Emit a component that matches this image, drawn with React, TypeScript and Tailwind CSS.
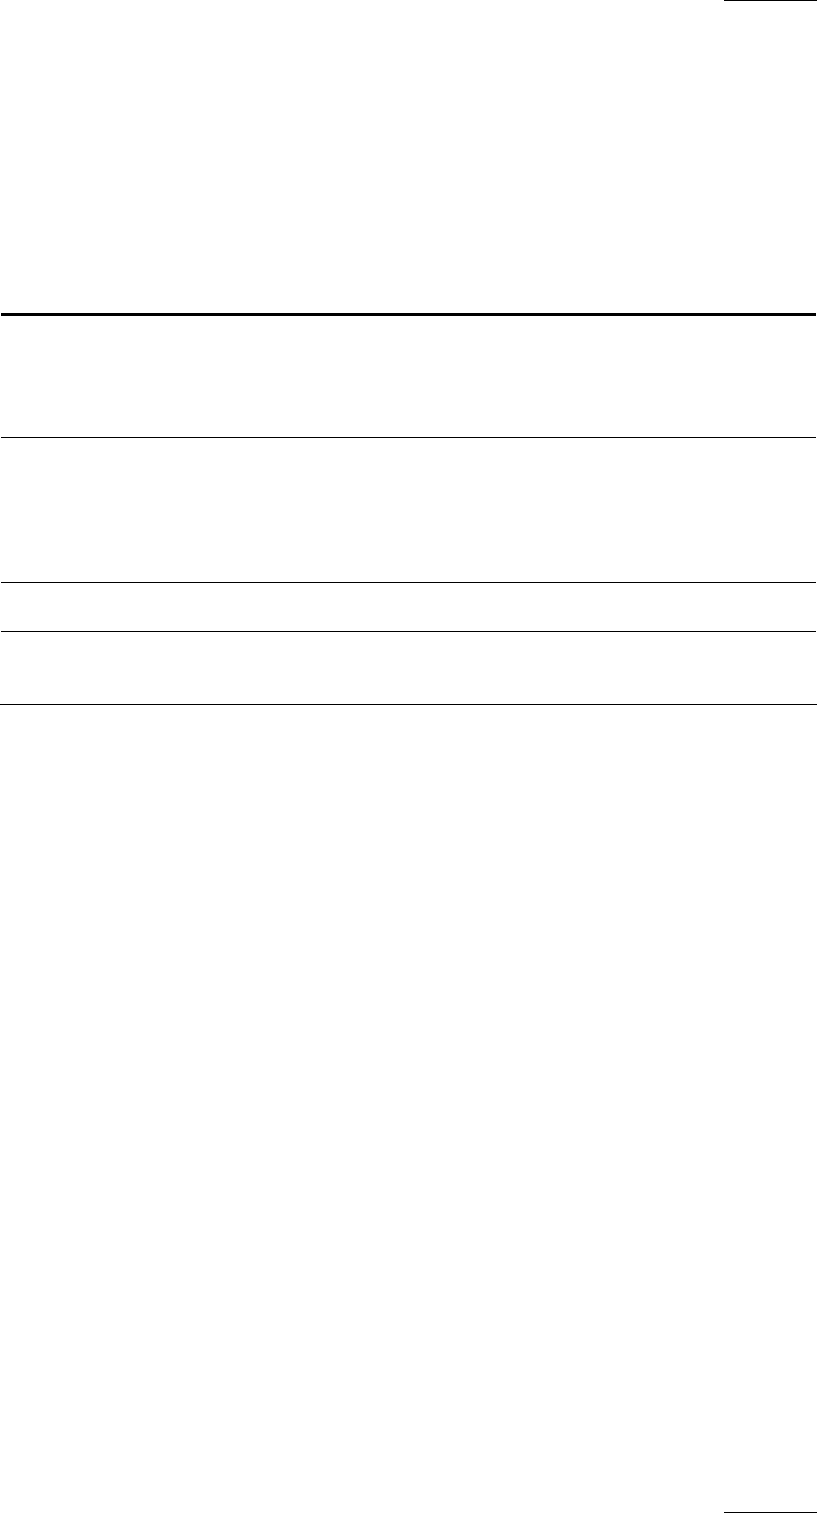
export default function App() {
  return (
    <div className="flex flex-col w-[817px] h-[1514px] bg-white" style={{ fontFamily: '"Liberation Sans", sans-serif' }}>
      <div className="flex justify-end">
        <div className="w-[93px] h-px bg-black" />
      </div>
      <div className="h-[312px]" />
      <div className="mx-px h-[3px] bg-black" />
      <div className="h-[121px]" />
      <div className="mx-px h-px bg-black" />
      <div className="h-[144px]" />
      <div className="mx-px h-px bg-black" />
      <div className="h-[48px]" />
      <div className="mx-px h-px bg-black" />
      <div className="h-[72px]" />
      <div className="h-px bg-black" />
      <div className="h-[807px]" />
      <div className="flex justify-end">
        <div className="w-[93px] h-px bg-black" />
      </div>
    </div>
  );
}
